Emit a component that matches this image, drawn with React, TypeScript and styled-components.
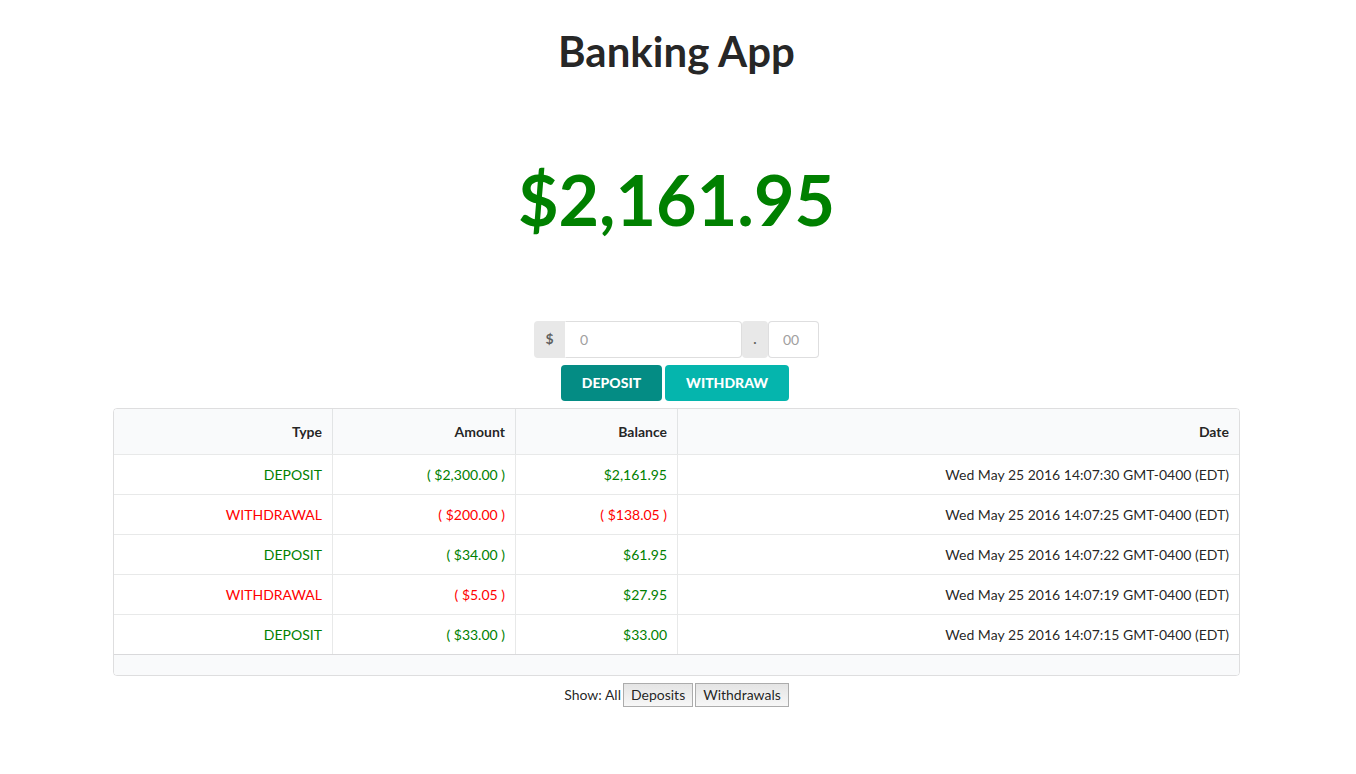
import React from "react";
import styled, { createGlobalStyle } from "styled-components";

type Kind = "DEPOSIT" | "WITHDRAWAL";

interface Transaction {
  kind: Kind;
  amount: string;
  balance: string;
  overdrawn?: boolean;
  date: string;
}

const transactions: Transaction[] = [
  { kind: "DEPOSIT", amount: "$2,300.00", balance: "$2,161.95", date: "Wed May 25 2016 14:07:30 GMT-0400 (EDT)" },
  { kind: "WITHDRAWAL", amount: "$200.00", balance: "( $138.05 )", overdrawn: true, date: "Wed May 25 2016 14:07:25 GMT-0400 (EDT)" },
  { kind: "DEPOSIT", amount: "$34.00", balance: "$61.95", date: "Wed May 25 2016 14:07:22 GMT-0400 (EDT)" },
  { kind: "WITHDRAWAL", amount: "$5.05", balance: "$27.95", date: "Wed May 25 2016 14:07:19 GMT-0400 (EDT)" },
  { kind: "DEPOSIT", amount: "$33.00", balance: "$33.00", date: "Wed May 25 2016 14:07:15 GMT-0400 (EDT)" },
];

const GlobalStyle = createGlobalStyle`
  *, *::before, *::after { box-sizing: border-box; }
  body {
    margin: 0;
    background: #fff;
    color: rgba(0, 0, 0, 0.87);
    font: 14px/20px Lato, "Liberation Sans", sans-serif;
  }
  button, input { font-family: inherit; }
`;

const Page = styled.main`
  display: flex;
  flex-direction: column;
  align-items: center;
  padding: 24px 116px 24px 113px;
`;

const Title = styled.h1`
  margin: 0;
  font-size: 42px;
  line-height: 54px;
  font-weight: 700;
`;

const Total = styled.p`
  margin: 76px 0;
  font-size: 70px;
  line-height: 90px;
  font-weight: 700;
  color: green;
`;

const AmountForm = styled.form`
  display: flex;
  flex-direction: column;
  align-items: center;
  gap: 7px;
`;

const Fields = styled.div`
  display: flex;
  height: 37px;
  margin-top: 1px;
`;

const Addon = styled.label<{ $width: number; $joined?: boolean }>`
  width: ${(p) => p.$width}px;
  border-radius: ${(p) => (p.$joined ? "4px 0 0 4px" : "4px")};
  background: #e8e8e8;
  color: rgba(0, 0, 0, 0.6);
  font-weight: 700;
  line-height: 36px;
  text-align: center;
`;

const Field = styled.input<{ $width: number; $joined?: boolean }>`
  width: ${(p) => p.$width}px;
  padding: 0 14px;
  border: 1px solid rgba(34, 36, 38, 0.15);
  border-left-color: ${(p) => (p.$joined ? "transparent" : "rgba(34, 36, 38, 0.15)")};
  border-radius: ${(p) => (p.$joined ? "0 4px 4px 0" : "4px")};
  background: #fff;
  color: rgba(0, 0, 0, 0.87);
  font-size: 14px;
  outline: none;

  &::placeholder { color: #a0a0a0; opacity: 1; }
`;

const Actions = styled.div`
  display: flex;
  gap: 3px;
  margin-right: 3px;
`;

const ActionButton = styled.button<{ $active?: boolean }>`
  height: 36px;
  padding: 0 21px 2px;
  border: 0;
  border-radius: 4px;
  background: ${(p) => (p.$active ? "#048c84" : "#05b5ad")};
  color: #fff;
  font-size: 14px;
  font-weight: 900;
  cursor: pointer;
`;

const Ledger = styled.table`
  width: 100%;
  margin: 7px 0;
  border: 1px solid rgba(34, 36, 38, 0.15);
  border-radius: 4px;
  border-collapse: separate;
  border-spacing: 0;
  table-layout: fixed;
  overflow: hidden;
  text-align: right;
`;

const Column = styled.col<{ $share?: string }>`
  width: ${(p) => p.$share ?? "auto"};
`;

const HeadCell = styled.th`
  height: 45px;
  padding: 0 10px;
  background: #f9fafb;
  font-weight: 700;

  & + & { border-left: 1px solid rgba(34, 36, 38, 0.1); }
`;

const Cell = styled.td<{ $tone?: "green" | "red" }>`
  height: 40px;
  padding: 0 10px;
  border-top: 1px solid rgba(34, 36, 38, 0.1);
  color: ${(p) => p.$tone ?? "inherit"};

  & + & { border-left: 1px solid rgba(34, 36, 38, 0.1); }
`;

const FootCell = styled.td`
  height: 21px;
  padding: 0;
  border-top: 1px solid rgba(34, 36, 38, 0.15);
  background: #f9fafb;
`;

const Filters = styled.div`
  display: flex;
  align-items: center;
  gap: 2px;
`;

const FilterButton = styled.button`
  height: 24px;
  padding: 0 7px 2px;
  border: 1px solid #acacac;
  border-radius: 0;
  background: linear-gradient(#e4e4e4, #f7f7f7);
  color: rgba(0, 0, 0, 0.87);
  font-size: 14px;
  cursor: pointer;
`;

export default function App() {
  return (
    <>
      <GlobalStyle />
      <Page>
        <Title>Banking App</Title>
        <Total>$2,161.95</Total>
        <AmountForm onSubmit={(e) => e.preventDefault()}>
          <Fields>
            <Addon htmlFor="dollars" $width={31} $joined>$</Addon>
            <Field id="dollars" placeholder="0" $width={177} $joined />
            <Addon htmlFor="cents" $width={26}>.</Addon>
            <Field id="cents" placeholder="00" $width={51} />
          </Fields>
          <Actions>
            <ActionButton type="submit" $active>DEPOSIT</ActionButton>
            <ActionButton type="button">WITHDRAW</ActionButton>
          </Actions>
        </AmountForm>
        <Ledger>
          <colgroup>
            <Column $share="218px" />
            <Column $share="183px" />
            <Column $share="162px" />
            <Column />
          </colgroup>
          <thead>
            <tr>
              <HeadCell scope="col">Type</HeadCell>
              <HeadCell scope="col">Amount</HeadCell>
              <HeadCell scope="col">Balance</HeadCell>
              <HeadCell scope="col">Date</HeadCell>
            </tr>
          </thead>
          <tbody>
            {transactions.map((t) => {
              const tone = t.kind === "DEPOSIT" ? "green" : "red";
              return (
                <tr key={t.date}>
                  <Cell $tone={tone}>{t.kind}</Cell>
                  <Cell $tone={tone}>{`( ${t.amount} )`}</Cell>
                  <Cell $tone={t.overdrawn ? "red" : "green"}>{t.balance}</Cell>
                  <Cell>{t.date}</Cell>
                </tr>
              );
            })}
          </tbody>
          <tfoot>
            <tr>
              <FootCell colSpan={4} />
            </tr>
          </tfoot>
        </Ledger>
        <Filters>
          <span>Show: All</span>
          <FilterButton type="button">Deposits</FilterButton>
          <FilterButton type="button">Withdrawals</FilterButton>
        </Filters>
      </Page>
    </>
  );
}
